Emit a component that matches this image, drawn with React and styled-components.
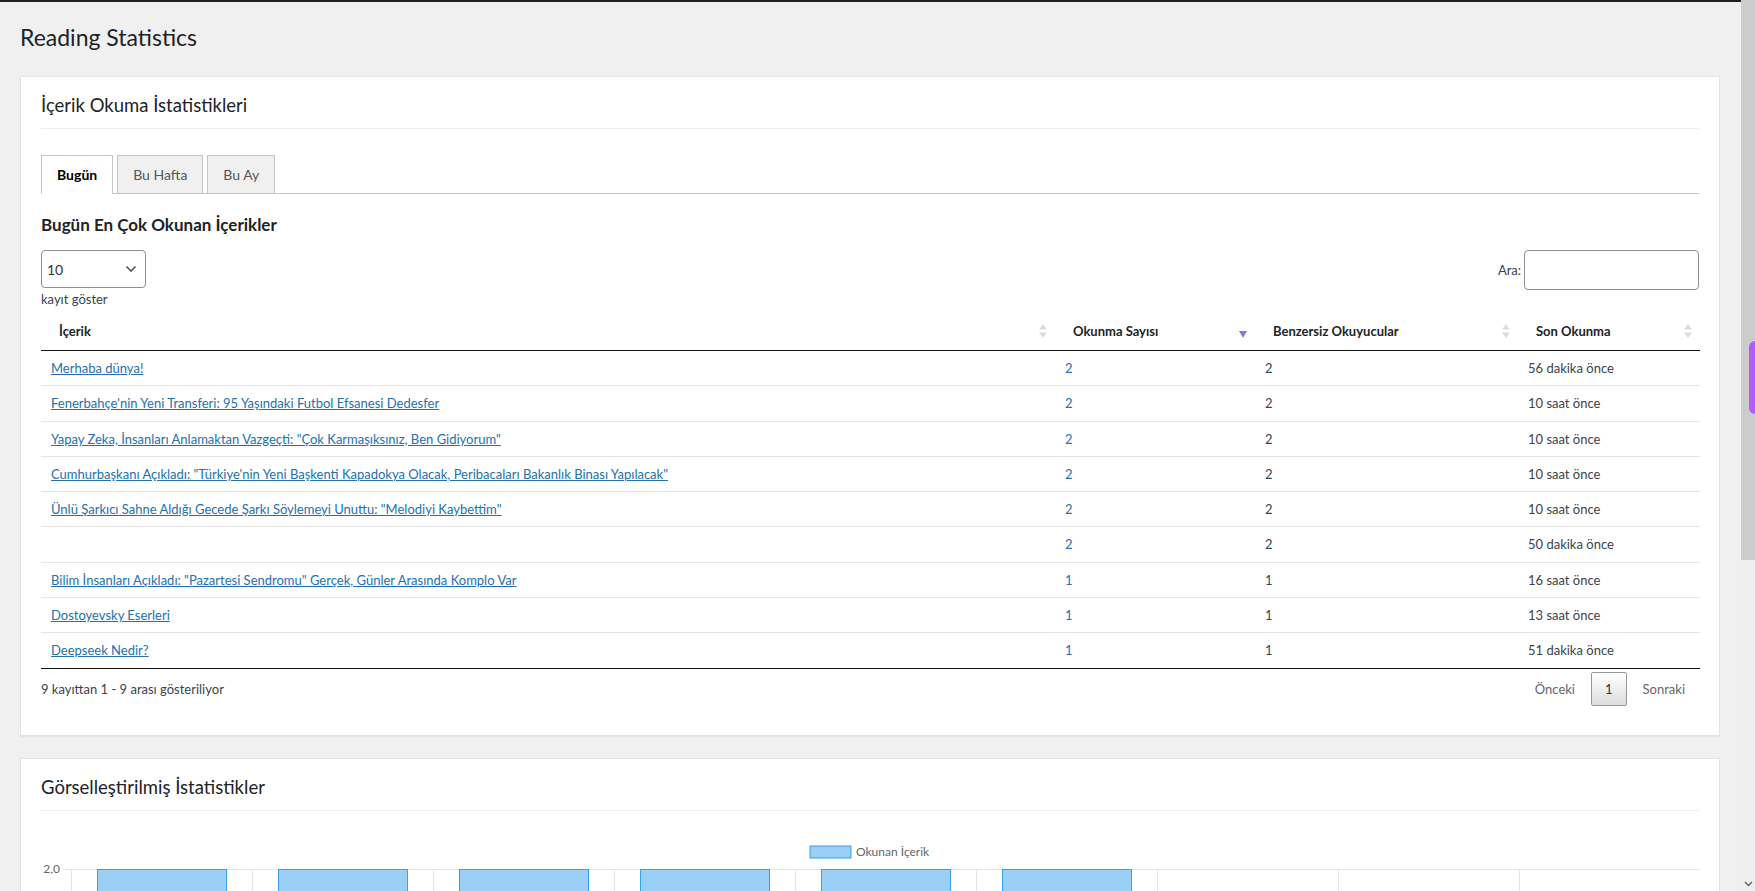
import React from "react";
import styled, { createGlobalStyle } from "styled-components";

const GlobalStyle = createGlobalStyle`
  html, body {
    margin: 0;
    padding: 0;
    overflow: hidden;
    background: #f0f0f1;
  }
  body {
    font-family: Lato, "Liberation Sans", Arial, sans-serif;
    font-size: 13px;
    color: #3c434a;
  }
  * {
    box-sizing: border-box;
  }
`;

const rows = [
  { title: "Merhaba dünya!", count: 2, unique: 2, last: "56 dakika önce" },
  {
    title: "Fenerbahçe'nin Yeni Transferi: 95 Yaşındaki Futbol Efsanesi Dedesfer",
    count: 2,
    unique: 2,
    last: "10 saat önce",
  },
  {
    title: 'Yapay Zeka, İnsanları Anlamaktan Vazgeçti: "Çok Karmaşıksınız, Ben Gidiyorum"',
    count: 2,
    unique: 2,
    last: "10 saat önce",
  },
  {
    title:
      'Cumhurbaşkanı Açıkladı: "Türkiye\'nin Yeni Başkenti Kapadokya Olacak, Peribacaları Bakanlık Binası Yapılacak"',
    count: 2,
    unique: 2,
    last: "10 saat önce",
  },
  {
    title: 'Ünlü Şarkıcı Sahne Aldığı Gecede Şarkı Söylemeyi Unuttu: "Melodiyi Kaybettim"',
    count: 2,
    unique: 2,
    last: "10 saat önce",
  },
  { title: "", count: 2, unique: 2, last: "50 dakika önce" },
  {
    title: 'Bilim İnsanları Açıkladı: "Pazartesi Sendromu" Gerçek, Günler Arasında Komplo Var',
    count: 1,
    unique: 1,
    last: "16 saat önce",
  },
  { title: "Dostoyevsky Eserleri", count: 1, unique: 1, last: "13 saat önce" },
  { title: "Deepseek Nedir?", count: 1, unique: 1, last: "51 dakika önce" },
];

const columns = [
  { label: "İçerik", width: 1014, sort: "none" },
  { label: "Okunma Sayısı", width: 200, sort: "desc" },
  { label: "Benzersiz Okuyucular", width: 263, sort: "none" },
  { label: "Son Okunma", width: 182, sort: "none" },
];

function SortIcon({ sort }) {
  if (sort === "desc") {
    return (
      <ActiveSort width="8" height="7" viewBox="0 0 8 7">
        <path d="M0 0 H8 L4 7 Z" fill="#7b7fd6" />
      </ActiveSort>
    );
  }
  return (
    <svg width="8" height="14" viewBox="0 0 8 14">
      <path d="M4 0 L8 5.5 H0 Z" fill="#dcdcdc" />
      <path d="M4 14 L8 8.5 H0 Z" fill="#dcdcdc" />
    </svg>
  );
}

function BarChart({ values }) {
  const left = 30;
  const top = 38;
  const step = 28;
  const cat = 181;
  const barWidth = 129;
  const ticks = Array.from({ length: 11 }, (_, i) => i);
  return (
    <ChartSvg width="1659" height="340" viewBox="0 0 1659 340">
      <rect x="769" y="15" width="41" height="12" fill="#9ad0f5" stroke="#36a2eb" strokeWidth="1" />
      <text x="815" y="25" fontSize="12" fill="#666" fontFamily="Lato, 'Liberation Sans', sans-serif">
        Okunan İçerik
      </text>
      {ticks.map((i) => (
        <g key={`h${i}`}>
          <line x1={left - 8} x2="1659" y1={top + i * step + 0.5} y2={top + i * step + 0.5} stroke="#e5e5e5" />
          <text
            x="19"
            y={top + i * step + 4}
            fontSize="12"
            fill="#666"
            textAnchor="end"
            fontFamily="Lato, 'Liberation Sans', sans-serif"
          >
            {(2 - i * 0.2).toFixed(1).replace(".", ",")}
          </text>
        </g>
      ))}
      {Array.from({ length: 10 }, (_, k) => (
        <line
          key={`v${k}`}
          x1={left + k * cat + 0.5}
          x2={left + k * cat + 0.5}
          y1={top}
          y2={top + 10 * step + 8}
          stroke="#e5e5e5"
        />
      ))}
      {values.map((v, k) => {
        const y = top + ((2 - v) / 0.2) * step;
        return (
          <rect
            key={`b${k}`}
            x={left + k * cat + 26.5}
            y={y + 0.5}
            width={barWidth}
            height={top + 10 * step - y}
            fill="#9ad0f5"
            stroke="#36a2eb"
            strokeWidth="1"
          />
        );
      })}
    </ChartSvg>
  );
}

export default function App() {
  return (
    <>
      <GlobalStyle />
      <Shell>
        <Main>
          <PageTitle>Reading Statistics</PageTitle>

          <Card>
            <CardTitle>İçerik Okuma İstatistikleri</CardTitle>
            <TabBar>
              <Tab active>Bugün</Tab>
              <Tab>Bu Hafta</Tab>
              <Tab>Bu Ay</Tab>
            </TabBar>

            <SectionTitle>Bugün En Çok Okunan İçerikler</SectionTitle>

            <Controls>
              <LengthBox>
                <SelectBox>
                  <span>10</span>
                  <svg width="12" height="8" viewBox="0 0 12 8">
                    <path d="M1.5 1.5 L6 6 L10.5 1.5" fill="none" stroke="#50575e" strokeWidth="1.6" />
                  </svg>
                </SelectBox>
                <SmallText>kayıt göster</SmallText>
              </LengthBox>
              <SearchBox>
                <SmallText>Ara:</SmallText>
                <SearchInput type="text" />
              </SearchBox>
            </Controls>

            <DataTable>
              <colgroup>
                {columns.map((c) => (
                  <col key={c.label} style={{ width: c.width }} />
                ))}
              </colgroup>
              <thead>
                <tr>
                  {columns.map((c) => (
                    <Th key={c.label}>
                      <ThInner>
                        <span>{c.label}</span>
                        <SortIcon sort={c.sort} />
                      </ThInner>
                    </Th>
                  ))}
                </tr>
              </thead>
              <tbody>
                {rows.map((r, i) => (
                  <tr key={i}>
                    <Td>{r.title && <TitleLink href="#">{r.title}</TitleLink>}</Td>
                    <Td>
                      <CountLink href="#">{r.count}</CountLink>
                    </Td>
                    <Td>{r.unique}</Td>
                    <Td>{r.last}</Td>
                  </tr>
                ))}
              </tbody>
            </DataTable>

            <TableFooter>
              <SmallText>9 kayıttan 1 - 9 arası gösteriliyor</SmallText>
              <Pager>
                <PageButton>Önceki</PageButton>
                <PageButton current>1</PageButton>
                <PageButton>Sonraki</PageButton>
              </Pager>
            </TableFooter>
          </Card>

          <Card>
            <CardTitle>Görselleştirilmiş İstatistikler</CardTitle>
            <BarChart values={rows.map((r) => r.count)} />
          </Card>
        </Main>

        <ScrollTrack>
          <ScrollThumb />
          <SideTab />
          <ScrollArrow>
            <svg width="9" height="6" viewBox="0 0 9 6">
              <path d="M1 1 L4.5 4.5 L8 1" fill="none" stroke="#606060" strokeWidth="1.4" />
            </svg>
          </ScrollArrow>
        </ScrollTrack>
      </Shell>
    </>
  );
}

const Shell = styled.div`
  display: flex;
  height: 891px;
  overflow: hidden;
`;

const Main = styled.div`
  flex: 1;
  min-width: 0;
  height: 891px;
  overflow: hidden;
  border-top: 2px solid #1d2327;
  padding: 0 21px 0 20px;
`;

const PageTitle = styled.h1`
  margin: 20px 0 24px;
  font-size: 23px;
  line-height: 30px;
  font-weight: 400;
  color: #1d2327;
`;

const Card = styled.div`
  background: #fff;
  border: 1px solid #e2e4e7;
  box-shadow: 0 1px 1px rgba(0, 0, 0, 0.04);
  padding: 0 20px 29px;
  margin-bottom: 22px;
`;

const CardTitle = styled.h2`
  margin: 0;
  padding: 16px 0 11px;
  border-bottom: 1px solid #eee;
  font-size: 18.5px;
  line-height: 24px;
  font-weight: 400;
  color: #1d2327;
`;

const TabBar = styled.div`
  display: flex;
  gap: 4px;
  margin-top: 26px;
  border-bottom: 1px solid #c3c4c7;
`;

const Tab = styled.div`
  height: 39px;
  margin-bottom: -1px;
  padding: 0 15px;
  display: flex;
  align-items: center;
  border: 1px solid #c3c4c7;
  border-bottom-color: ${(props) => (props.active ? "#fff" : "#c3c4c7")};
  background: ${(props) => (props.active ? "#fff" : "#f0f0f1")};
  color: ${(props) => (props.active ? "#000" : "#50575e")};
  font-size: 14px;
  font-weight: ${(props) => (props.active ? 700 : 400)};
`;

const SectionTitle = styled.h3`
  margin: 21px 0 0;
  font-size: 17px;
  line-height: 20px;
  font-weight: 700;
  color: #1d2327;
`;

const Controls = styled.div`
  display: flex;
  justify-content: space-between;
  align-items: flex-start;
  margin-top: 15px;
`;

const LengthBox = styled.div`
  display: flex;
  flex-direction: column;
  gap: 2px;
`;

const SelectBox = styled.div`
  width: 105px;
  height: 38px;
  padding: 0 8px 0 5px;
  display: flex;
  align-items: center;
  justify-content: space-between;
  border: 1px solid #8c8f94;
  border-radius: 4px;
  font-size: 14px;
  color: #2c3338;
`;

const SmallText = styled.span`
  font-size: 13px;
  line-height: 18px;
  color: #3c434a;
`;

const SearchBox = styled.div`
  display: flex;
  align-items: center;
  gap: 3px;
`;

const SearchInput = styled.input`
  width: 175px;
  height: 40px;
  border: 1px solid #8c8f94;
  border-radius: 4px;
  background: #fff;
  outline: none;
`;

const DataTable = styled.table`
  width: 100%;
  margin-top: 4px;
  table-layout: fixed;
  border-collapse: collapse;
  border-bottom: 1px solid #111;
`;

const Th = styled.th`
  padding: 10px 8px 10px 18px;
  border-bottom: 1px solid #111;
  text-align: left;
  font-size: 13px;
  line-height: 18px;
  font-weight: 700;
  color: #1d2327;
`;

const ThInner = styled.div`
  display: flex;
  justify-content: space-between;
  align-items: center;
`;

const ActiveSort = styled.svg`
  margin-top: 7px;
`;

const Td = styled.td`
  padding: 8px 10px;
  line-height: 18.3px;
  font-size: 13px;
  color: #3c434a;
  border-top: 1px solid #e5e5e5;
  white-space: nowrap;

  tr:first-child > & {
    border-top: none;
  }
`;

const TitleLink = styled.a`
  color: #2271b1;
  text-decoration: underline;
`;

const CountLink = styled.a`
  color: #2271b1;
  text-decoration: none;
`;

const TableFooter = styled.div`
  display: flex;
  justify-content: space-between;
  align-items: center;
  margin-top: 3px;
`;

const Pager = styled.div`
  display: flex;
  gap: 2px;
`;

const PageButton = styled.div`
  height: 34px;
  padding: 0 13px;
  display: flex;
  align-items: center;
  border: 1px solid ${(props) => (props.current ? "#979797" : "transparent")};
  border-radius: 2px;
  background: ${(props) =>
    props.current ? "linear-gradient(to bottom, #fff 0%, #dcdcdc 100%)" : "transparent"};
  color: ${(props) => (props.current ? "#333" : "#666")};
  font-size: 13px;
`;

const ChartSvg = styled.svg`
  display: block;
  margin-top: 20px;
`;

const ScrollTrack = styled.div`
  position: relative;
  width: 14px;
  height: 891px;
  background: #efefef;
`;

const ScrollThumb = styled.div`
  width: 100%;
  height: 560px;
  background: #cccccc;
`;

const SideTab = styled.div`
  position: absolute;
  right: 0;
  top: 341px;
  width: 6px;
  height: 73px;
  background: #b45cf7;
  border-radius: 6px 0 0 6px;
`;

const ScrollArrow = styled.div`
  position: absolute;
  bottom: 4px;
  left: 3px;
  display: flex;
`;
